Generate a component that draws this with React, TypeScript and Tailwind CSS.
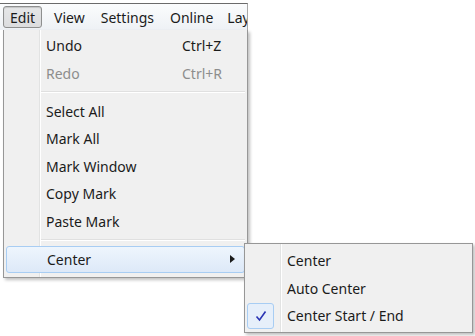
import React from 'react'

type Item = { label: string; shortcut?: string; disabled?: boolean } | 'sep'

const editItems: Item[] = [
  { label: 'Undo', shortcut: 'Ctrl+Z' },
  { label: 'Redo', shortcut: 'Ctrl+R', disabled: true },
  'sep',
  { label: 'Select All' },
  { label: 'Mark All' },
  { label: 'Mark Window' },
  { label: 'Copy Mark' },
  { label: 'Paste Mark' },
  'sep',
]

function Check() {
  return (
    <svg width="12" height="12" viewBox="0 0 12 12">
      <path d="M1.5 6.5 L4.5 10 L10.5 1.5" fill="none" stroke="#2a34b4" strokeWidth="1.6" />
    </svg>
  )
}

export default function App() {
  return (
    <div
      className="relative w-[475px] h-[336px] bg-white text-[14px] text-[#1b1b1b] overflow-hidden"
      style={{ fontFamily: '"Noto Sans", "Open Sans", sans-serif' }}
    >
      <div className="h-[3px]" />
      {/* menu bar */}
      <div className="w-[248px] h-[27px] flex items-center border-t border-[#6b6b6b] border-r border-r-[#a8a8a8] bg-gradient-to-b from-[#fbfcfd] to-[#eef1f5] overflow-hidden whitespace-nowrap">
        <div className="ml-[3px] h-[22px] px-[6px] flex items-center rounded-[3px] border border-[#8e8f8f] bg-gradient-to-b from-[#e6e7e8] to-[#dcdddf] shadow-[inset_0_1px_1px_rgba(0,0,0,0.15)]">
          Edit
        </div>
        <div className="px-[7px] ml-[5px]">View</div>
        <div className="px-[7px] ml-[2px]">Settings</div>
        <div className="px-[7px] ml-[2px]">Online</div>
        <div className="px-[7px]">Layout</div>
      </div>

      {/* edit dropdown */}
      <div className="ml-[3px] w-[245px] h-[248px] flex bg-[#f0f0f0] border-l border-r border-b border-[#979797] shadow-[2px_2px_3px_rgba(0,0,0,0.25)]">
        <div className="flex-1 pt-[2px] flex flex-col relative">
          <div className="absolute left-[35px] top-0 bottom-0 w-[2px] border-l border-[#e2e3e3] bg-white" />
          {editItems.map((it, i) =>
            it === 'sep' ? (
              <div key={i} className="h-[10.5px] flex items-center pl-[37px] pr-[2px]">
                <div className="w-full h-[2px] border-t border-[#e0e0e0] bg-white" />
              </div>
            ) : (
              <div
                key={i}
                className={`h-[27.5px] flex items-center pl-[42px] pr-[8px] relative ${it.disabled ? 'text-[#8d8d8d]' : ''}`}
              >
                <span className="w-[136px]">{it.label}</span>
                {it.shortcut && <span>{it.shortcut}</span>}
              </div>
            )
          )}
          <div className="mx-[2px] h-[27px] flex items-center pl-[40px] pr-[9px] rounded-[3px] border border-[#a8cdf3] bg-gradient-to-b from-[#eef5fd] to-[#dde9f8] relative">
            <span className="flex-1">Center</span>
            <svg width="5" height="8" viewBox="0 0 5 8">
              <path d="M0 0 L5 4 L0 8 Z" fill="#1b1b1b" />
            </svg>
          </div>
        </div>
      </div>

      {/* submenu */}
      <div className="absolute left-[244px] top-[243px] w-[229px] h-[90px] bg-[#f0f0f0] border border-[#979797] shadow-[2px_2px_3px_rgba(0,0,0,0.25)] pt-[3px] flex flex-col">
        <div className="absolute left-[35px] top-0 bottom-0 w-[2px] border-l border-[#e2e3e3] bg-white" />
        <div className="h-[27.5px] flex items-center pl-[42px]">Center</div>
        <div className="h-[27.5px] flex items-center pl-[42px]">Auto Center</div>
        <div className="h-[27.5px] flex items-center relative">
          <div className="ml-[2px] w-[27px] h-[26px] flex items-center justify-center rounded-[3px] border border-[#a8cdf3] bg-[#e6effa]">
            <Check />
          </div>
          <span className="ml-[13px]">Center Start / End</span>
        </div>
      </div>
    </div>
  )
}
